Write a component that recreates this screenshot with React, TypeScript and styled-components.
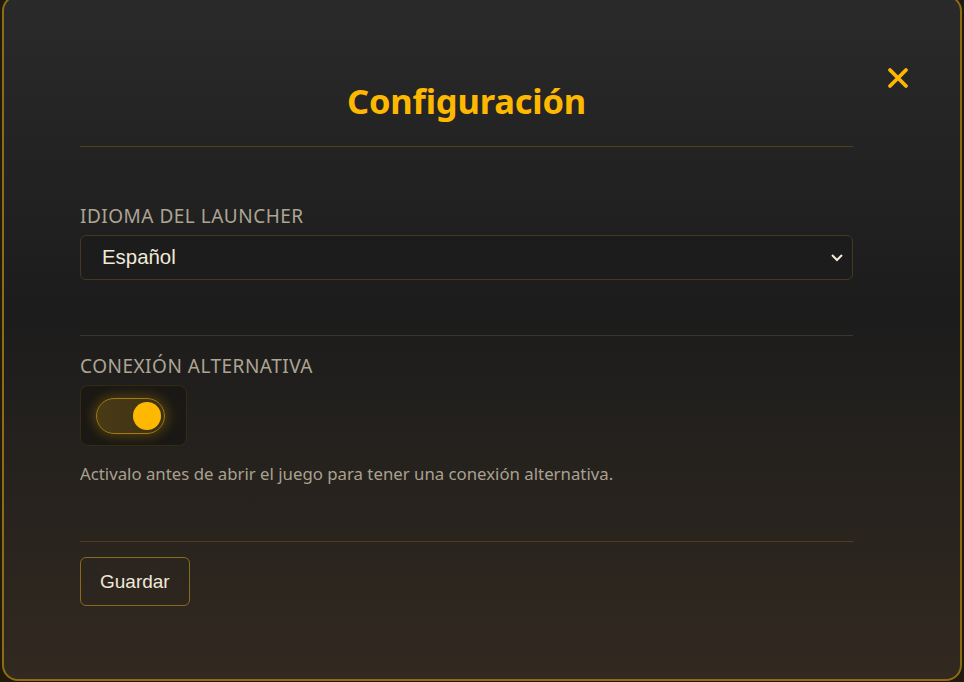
import React from "react";
import styled, { createGlobalStyle } from "styled-components";

const Global = createGlobalStyle`
  html, body { margin: 0; padding: 0; background: #1f1a0c; overflow: hidden; }
  * { box-sizing: border-box; }
`;

const Stage = styled.div`
  width: 964px;
  height: 682px;
  display: flex;
  justify-content: center;
  align-items: flex-end;
  padding-bottom: 1px;
`;

const Modal = styled.div`
  width: 960px;
  height: 686px;
  border: 2px solid #8d6c12;
  border-radius: 16px;
  background: linear-gradient(180deg, #2a2a2a 0%, #1c1c1c 46%, #322920 100%);
  padding: 52px 107px 0 76px;
  display: flex;
  flex-direction: column;
  position: relative;
  font-family: "Noto Sans", "Open Sans", sans-serif;
`;

const Close = styled.button`
  position: absolute;
  top: 67px;
  right: 48px;
  background: none;
  border: none;
  padding: 0;
  width: 28px;
  height: 28px;
  display: flex;
  align-items: center;
  justify-content: center;
  cursor: pointer;
`;

const Title = styled.h1`
  margin: 0;
  height: 97px;
  padding-top: 30px;
  text-align: center;
  font-size: 34.5px;
  font-weight: 700;
  color: #ffb800;
  line-height: 44px;
  letter-spacing: -0.2px;
`;

const Divider = styled.hr<{ $tone: "gold" | "grey" }>`
  margin: 0;
  border: none;
  height: 1px;
  background: ${(p) => (p.$tone === "gold" ? "#4f401c" : "#3a3530")};
`;

const Section = styled.div<{ $top: number; $bottom: number }>`
  padding-top: ${(p) => p.$top}px;
  padding-bottom: ${(p) => p.$bottom}px;
  display: flex;
  flex-direction: column;
  align-items: flex-start;
`;

const Label = styled.div`
  font-size: 19px;
  color: #ada594;
  letter-spacing: 0.5px;
  line-height: 24px;
  margin-bottom: 7px;
`;

const SelectBox = styled.div`
  width: 100%;
  height: 45px;
  border: 1px solid #44391d;
  border-radius: 6px;
  background: #1c1c1c;
  display: flex;
  align-items: center;
  justify-content: space-between;
  padding: 0 8px 0 21px;
  font-family: "Liberation Sans", Arial, sans-serif;
  font-size: 20.4px;
  color: #f2ead8;
`;

const ToggleBox = styled.div`
  width: 107px;
  height: 61px;
  border: 1px solid #342b14;
  border-radius: 8px;
  background: radial-gradient(ellipse at center, #2a2414 0%, #1a1814 70%);
  display: flex;
  align-items: center;
  padding-left: 15px;
`;

const Track = styled.div<{ $on: boolean }>`
  width: 69px;
  height: 36px;
  border-radius: 18px;
  border: 1px solid #a27c12;
  background: linear-gradient(90deg, #4a3b16 0%, #3d3214 100%);
  box-shadow: 0 0 12px 2px rgba(255, 184, 0, 0.22);
  display: flex;
  align-items: center;
  justify-content: ${(p) => (p.$on ? "flex-end" : "flex-start")};
  padding: 0 3px;
`;

const Knob = styled.div`
  width: 28px;
  height: 28px;
  border-radius: 50%;
  background: #ffb800;
`;

const Help = styled.p`
  margin: 17px 0 0;
  font-size: 16.8px;
  color: #a9a190;
  line-height: 22px;
`;

const SaveButton = styled.button`
  height: 49px;
  padding: 0 19px;
  border: 1px solid #8a6a18;
  border-radius: 6px;
  background: transparent;
  color: #f0e8d8;
  font-family: "Liberation Sans", Arial, sans-serif;
  font-size: 19px;
`;

export default function App() {
  return (
    <>
      <Global />
      <Stage>
        <Modal>
          <Close aria-label="Cerrar">
            <svg width="22" height="22" viewBox="0 0 22 22">
              <path d="M3 3 L19 19 M19 3 L3 19" stroke="#ffb800" strokeWidth="3.8" strokeLinecap="round" />
            </svg>
          </Close>
          <Title>Configuración</Title>
          <Divider $tone="gold" />
          <Section $top={57} $bottom={55}>
            <Label>IDIOMA DEL LAUNCHER</Label>
            <SelectBox>
              <span>Español</span>
              <svg width="14" height="10" viewBox="0 0 14 10">
                <path d="M2 2 L7 7 L12 2" stroke="#f2ead8" strokeWidth="2" fill="none" />
              </svg>
            </SelectBox>
          </Section>
          <Divider $tone="grey" />
          <Section $top={18} $bottom={56}>
            <Label>CONEXIÓN ALTERNATIVA</Label>
            <ToggleBox>
              <Track $on>
                <Knob />
              </Track>
            </ToggleBox>
            <Help>Activalo antes de abrir el juego para tener una conexión alternativa.</Help>
          </Section>
          <Divider $tone="gold" />
          <Section $top={15} $bottom={0}>
            <SaveButton>Guardar</SaveButton>
          </Section>
        </Modal>
      </Stage>
    </>
  );
}
